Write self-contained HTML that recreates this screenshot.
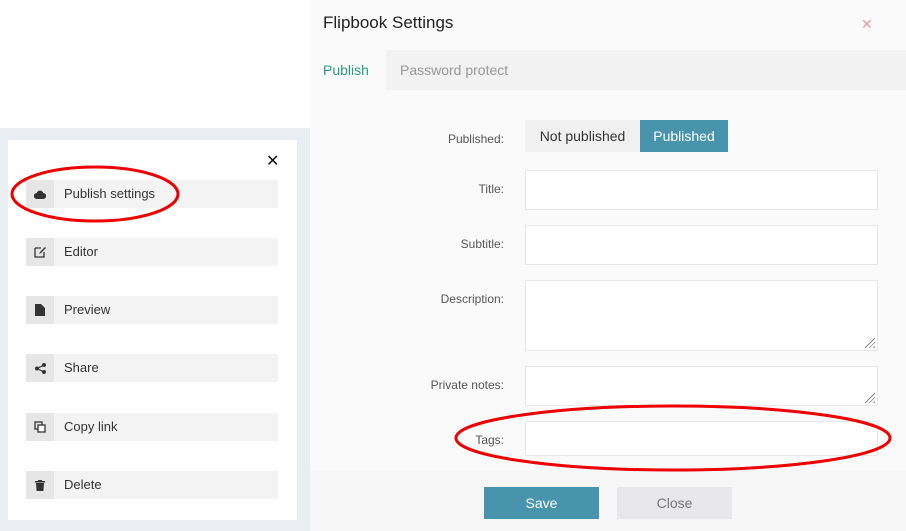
<!DOCTYPE html>
<html><head><meta charset="utf-8"><style>
*{box-sizing:border-box;margin:0;padding:0}
body{width:906px;height:531px;position:relative;overflow:hidden;background:#fff;font-family:"Liberation Sans","DejaVu Sans",sans-serif}
.abs{position:absolute}
.left-bg{left:0;top:128px;width:310px;height:403px;background:#eaedf2}
.card{left:8px;top:140px;width:289px;height:380px;background:#fff}
.item{position:absolute;left:26px;width:252px;height:28px;background:#f3f3f3;font-size:13px;color:#333;line-height:28px}
.item .ic{position:absolute;left:0;top:0;width:28px;height:28px;background:#e6e6e6;display:flex;align-items:center;justify-content:center}
.item span{position:absolute;left:38px}
.panel{left:310px;top:0;width:596px;height:531px;background:#fafafa}
.lbl{position:absolute;right:402px;font-size:12px;color:#555;text-align:right}
.inp{position:absolute;left:525px;width:353px;background:#fff;border:1px solid #e8e8e8}
.grip{position:absolute;right:2px;bottom:2px;width:11px;height:11px;background:repeating-linear-gradient(135deg,transparent 0 2px,#888 2px 3px);clip-path:polygon(100% 0,100% 100%,0 100%)}
</style></head><body>
<div class="abs left-bg"></div>
<div class="abs card"></div>
<div class="abs" style="left:266px;top:151px;font-size:16px;font-weight:bold;color:#111">✕</div>
<div class="item" style="top:180px"><div class="ic"><svg width="12" height="9" viewBox="0 0 12 9"><path d="M3 9a3 3 0 0 1-.3-6A3.5 3.5 0 0 1 9.3 3 3 3 0 0 1 9 9z" fill="#333"/></svg></div><span>Publish settings</span></div>
<div class="item" style="top:238px"><div class="ic"><svg width="12" height="12" viewBox="0 0 12 12"><path d="M1 2h6M1 2v9h9V6" stroke="#333" fill="none" stroke-width="1.3"/><path d="M5 8l1-2 5-5 1 1-5 5z" fill="#333"/></svg></div><span>Editor</span></div>
<div class="item" style="top:296px"><div class="ic"><svg width="10" height="12" viewBox="0 0 10 12"><path d="M0 0h6l4 4v8H0z" fill="#333"/></svg></div><span>Preview</span></div>
<div class="item" style="top:354px"><div class="ic"><svg width="11" height="11" viewBox="0 0 11 11"><circle cx="9" cy="2" r="2" fill="#333"/><circle cx="2" cy="5.5" r="2" fill="#333"/><circle cx="9" cy="9" r="2" fill="#333"/><path d="M9 2L2 5.5 9 9" stroke="#333" stroke-width="1.2" fill="none"/></svg></div><span>Share</span></div>
<div class="item" style="top:413px"><div class="ic"><svg width="12" height="12" viewBox="0 0 12 12"><rect x="1" y="1" width="7" height="7" fill="none" stroke="#333" stroke-width="1.3"/><rect x="4" y="4" width="7" height="7" fill="#fff" stroke="#333" stroke-width="1.3"/></svg></div><span>Copy link</span></div>
<div class="item" style="top:471px"><div class="ic"><svg width="10" height="11" viewBox="0 0 10 11"><path d="M0 1h10v1.5H0zM3 0h4v1H3zM1 3h8l-.6 8H1.6z" fill="#333"/></svg></div><span>Delete</span></div>

<div class="abs panel"></div>
<div class="abs" style="left:323px;top:13px;font-size:17px;color:#222">Flipbook Settings</div>
<div class="abs" style="left:861px;top:16px;font-size:14px;color:#e99">✕</div>
<div class="abs" style="left:386px;top:50px;width:520px;height:40px;background:#f2f2f2"></div>
<div class="abs" style="left:323px;top:62px;font-size:14px;color:#2a9d84">Publish</div>
<div class="abs" style="left:400px;top:62px;font-size:14px;color:#999">Password protect</div>

<div class="lbl" style="top:132px">Published:</div>
<div class="abs" style="left:525px;top:120px;width:115px;height:32px;background:#f0f0f0;font-size:14px;color:#333;text-align:center;line-height:32px">Not published</div>
<div class="abs" style="left:640px;top:120px;width:88px;height:32px;background:#4894ad;font-size:14px;color:#fff;text-align:center;line-height:32px">Published</div>

<div class="lbl" style="top:182px">Title:</div><div class="inp" style="top:170px;height:40px"></div>
<div class="lbl" style="top:237px">Subtitle:</div><div class="inp" style="top:225px;height:40px"></div>
<div class="lbl" style="top:292px">Description:</div><div class="inp" style="top:280px;height:71px"><div class="grip"></div></div>
<div class="lbl" style="top:378px">Private notes:</div><div class="inp" style="top:366px;height:40px"><div class="grip"></div></div>
<div class="lbl" style="top:433px">Tags:</div><div class="inp" style="top:421px;height:35px"></div>

<div class="abs" style="left:310px;top:470px;width:596px;height:61px;background:#f7f7f7"></div>
<div class="abs" style="left:484px;top:487px;width:115px;height:32px;background:#4894ad;color:#fff;font-size:14px;text-align:center;line-height:32px">Save</div>
<div class="abs" style="left:617px;top:487px;width:115px;height:32px;background:#e8e8ec;color:#777;font-size:14px;text-align:center;line-height:32px">Close</div>

<svg class="abs" style="left:0;top:0" width="906" height="531">
<ellipse cx="95" cy="194" rx="83" ry="27" fill="none" stroke="#e00" stroke-width="3"/>
<ellipse cx="673" cy="438" rx="217" ry="32" fill="none" stroke="#e00" stroke-width="3"/>
</svg>
</body></html>
